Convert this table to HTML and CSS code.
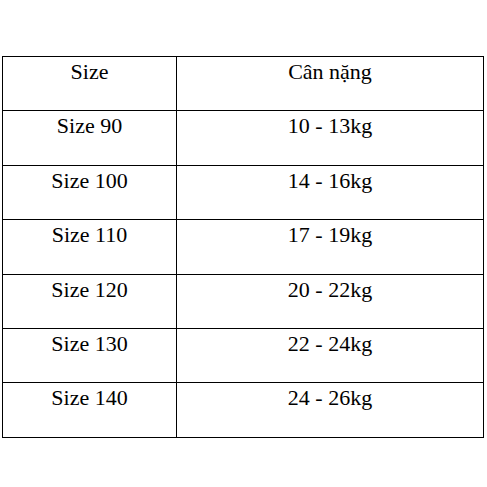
FILE: index.html
```html
<!DOCTYPE html>
<html>
<head>
<meta charset="utf-8">
<link rel="stylesheet" href="styles.css">
</head>
<body>
<div class="table">
  <div class="cell">Size</div><div class="cell">Cân nặng</div>
  <div class="cell">Size 90</div><div class="cell">10 - 13kg</div>
  <div class="cell">Size 100</div><div class="cell">14 - 16kg</div>
  <div class="cell">Size 110</div><div class="cell">17 - 19kg</div>
  <div class="cell">Size 120</div><div class="cell">20 - 22kg</div>
  <div class="cell">Size 130</div><div class="cell">22 - 24kg</div>
  <div class="cell">Size 140</div><div class="cell">24 - 26kg</div>
</div>
</body>
</html>
```
FILE: styles.css
```css
html, body {
  margin: 0;
  padding: 0;
  background: #fff;
}
body {
  color: #000;
}
.table {
  margin: 56px 0 0 2px;
  width: 482px;
  display: grid;
  grid-template-columns: 174px 1fr;
  grid-auto-rows: 54.4px;
  border-top: 1px solid #000;
  border-left: 1px solid #000;
  box-sizing: border-box;
}
.cell {
  font-family: "Liberation Serif", serif;
  border-right: 1px solid #000;
  border-bottom: 1px solid #000;
  text-align: center;
  font-size: 22px;
  line-height: 24px;
  padding-top: 3px;
}
```
